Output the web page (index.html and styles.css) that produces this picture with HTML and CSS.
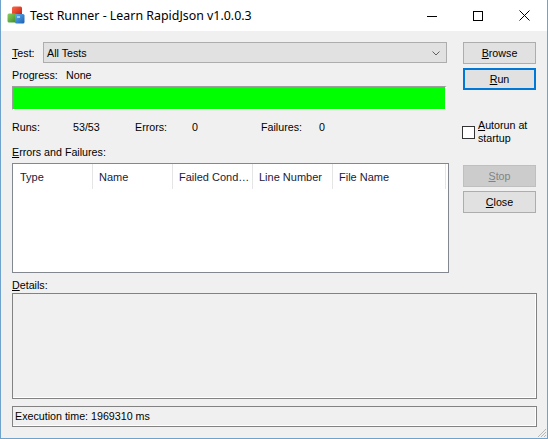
FILE: index.html
```html
<!DOCTYPE html>
<html>
<head>
<meta charset="utf-8">
<link rel="stylesheet" href="styles.css">
</head>
<body>
<div class="window">
  <div class="titlebar">
    <svg class="appicon" width="18" height="18" viewBox="0 0 18 18">
      <defs>
        <linearGradient id="gr" x1="0" y1="0" x2="1" y2="1"><stop offset="0" stop-color="#ff6a4a"/><stop offset="1" stop-color="#c01a10"/></linearGradient>
        <linearGradient id="gg" x1="0" y1="0" x2="1" y2="1"><stop offset="0" stop-color="#8fd060"/><stop offset="1" stop-color="#3a8a2a"/></linearGradient>
        <linearGradient id="gb" x1="0" y1="0" x2="1" y2="1"><stop offset="0" stop-color="#5fb0f0"/><stop offset="1" stop-color="#1a5fb0"/></linearGradient>
      </defs>
      <rect x="5" y="0.5" width="10" height="9" rx="1.5" fill="url(#gr)"/>
      <rect x="0.5" y="7.5" width="9" height="9" rx="1.5" fill="url(#gg)"/>
      <rect x="8" y="8" width="9.5" height="9.5" rx="1.5" fill="url(#gb)"/>
      <rect x="10" y="10" width="3" height="2" fill="#bfe3ff" opacity="0.7"/>
    </svg>
    <span class="title">Test Runner - Learn RapidJson v1.0.0.3</span>
    <div class="caption">
      <div class="cbtn"><svg width="10" height="10" viewBox="0 0 10 10"><line x1="0" y1="5.5" x2="10" y2="5.5" stroke="#000" stroke-width="1"/></svg></div>
      <div class="cbtn"><svg width="10" height="10" viewBox="0 0 10 10"><rect x="0.5" y="0.5" width="9" height="9" fill="none" stroke="#000" stroke-width="1"/></svg></div>
      <div class="cbtn"><svg width="11" height="11" viewBox="0 0 11 11"><path d="M0.5 0.5 L10.5 10.5 M10.5 0.5 L0.5 10.5" stroke="#000" stroke-width="1" fill="none"/></svg></div>
    </div>
  </div>
  <div class="client">
    <div class="top">
      <div class="left">
        <div class="test-row">
          <span class="test-label"><u>T</u>est:</span>
          <div class="combo">
            <span>All Tests</span>
            <svg class="chev" width="8" height="5" viewBox="0 0 8 5"><path d="M0.5 0.5 L4 4 L7.5 0.5" stroke="#606060" stroke-width="1" fill="none"/></svg>
          </div>
        </div>
        <div class="progress-label"><span class="pl">Progress:</span><span>None</span></div>
        <div class="progress"></div>
        <div class="stats">
          <span class="s1">Runs:</span><span class="s2">53/53</span><span class="s3">Errors:</span><span class="s4">0</span><span class="s5">Failures:</span><span>0</span>
        </div>
        <div class="section-label errors-label"><u>E</u>rrors and Failures:</div>
        <div class="list">
          <div class="list-header">
            <div class="col c1">Type</div>
            <div class="col">Name</div>
            <div class="col">Failed Cond…</div>
            <div class="col">Line Number</div>
            <div class="col c5">File Name</div>
          </div>
        </div>
      </div>
      <div class="right">
        <div class="btn browse"><u>B</u>rowse</div>
        <div class="btn run"><u>R</u>un</div>
        <div class="autorun">
          <span class="checkbox"></span>
          <span class="autorun-text"><u>A</u>utorun at<br>startup</span>
        </div>
        <div class="btn stop disabled"><u>S</u>top</div>
        <div class="btn close"><u>C</u>lose</div>
      </div>
    </div>
    <div class="section-label details-label"><u>D</u>etails:</div>
    <div class="details"></div>
    <div class="status">Execution time: 1969310 ms</div>
  </div>
  <svg class="grip" width="10" height="10" viewBox="0 0 10 10">
    <path d="M9 1 L1 9 M9 4 L4 9 M9 7 L7 9" stroke="#b8b8b8" stroke-width="1" fill="none"/>
  </svg>
</div>
</body>
</html>
```

FILE: styles.css
```css
* { box-sizing: border-box; }
html, body { margin: 0; padding: 0; }
body {
  width: 548px;
  height: 439px;
  overflow: hidden;
  background: #ffffff;
  font-family: "Liberation Sans", Arial, sans-serif;
  font-size: 10.7px;
  color: #000;
}
u { text-decoration: underline; text-underline-offset: 1px; }
.window {
  position: relative;
  width: 548px;
  height: 439px;
  border: 1px solid #6fa3cb;
  border-top: none;
  background: #f0f0f0;
  display: flex;
  flex-direction: column;
}
.titlebar {
  height: 31px;
  flex-shrink: 0;
  background: #ffffff;
  display: flex;
  align-items: center;
}
.appicon { margin-left: 6px; margin-top: -2px; }
.title {
  margin-left: 5px;
  font-family: "Noto Sans", "Open Sans", sans-serif;
  font-size: 12.4px;
  color: #000;
  flex: 1;
}
.caption { display: flex; height: 31px; }
.cbtn {
  width: 46px;
  height: 31px;
  display: flex;
  align-items: center;
  justify-content: center;
}
.client {
  flex: 1;
  padding: 0 10px 0 11px;
  display: flex;
  flex-direction: column;
}
.top { display: flex; }
.left { width: 437px; display: flex; flex-direction: column; }
.right { margin-left: 13px; display: flex; flex-direction: column; }

.test-row { display: flex; align-items: center; margin-top: 11px; height: 21px; }
.test-label { width: 31px; }
.combo {
  width: 404px;
  height: 21px;
  background: #e1e1e1;
  border: 1px solid #adadad;
  display: flex;
  align-items: center;
  justify-content: space-between;
  padding: 0 6px 0 3px;
}
.chev { margin-top: 1px; }
.progress-label { margin-top: 6px; height: 13px; line-height: 13px; display: flex; }
.pl { width: 54px; }
.progress {
  margin-top: 4px;
  width: 435px;
  height: 24px;
  background: #00ff00;
  border-top: 1px solid #9d9d9d;
  border-left: 1px solid #9d9d9d;
  border-right: 2px solid #ffffff;
  border-bottom: 1px solid #ffffff;
}
.stats { margin-top: 11px; height: 13px; line-height: 13px; display: flex; }
.s1 { width: 61px; }
.s2 { width: 62px; }
.s3 { width: 57px; }
.s4 { width: 69px; }
.s5 { width: 58px; }
.section-label { height: 13px; line-height: 13px; }
.errors-label { margin-top: 12px; }
.list {
  margin-top: 4px;
  width: 437px;
  height: 110px;
  background: #ffffff;
  border: 1px solid #828790;
}
.list-header { display: flex; height: 25px; }
.col {
  width: 80px;
  height: 25px;
  line-height: 26px;
  padding-left: 6px;
  border-right: 1px solid #e5e5e5;
  color: #1a1a3a;
  font-size: 11px;
  white-space: nowrap;
  overflow: hidden;
}
.col.c1 { padding-left: 7px; }
.col.c5 { width: 113px; }

.btn {
  width: 73px;
  height: 22px;
  background: #e1e1e1;
  border: 1px solid #adadad;
  display: flex;
  align-items: center;
  justify-content: center;
  margin-left: 1px;
}
.browse { margin-top: 11px; }
.run { margin-top: 4px; border: 2px solid #0078d7; }
.autorun { margin-top: 29px; display: flex; height: 26px; }
.checkbox {
  width: 13px;
  height: 13px;
  border: 1px solid #333333;
  background: #ffffff;
  margin-top: 7px;
}
.autorun-text { margin-left: 3px; line-height: 13px; }
.stop { margin-top: 20px; }
.close { margin-top: 4px; }
.btn.disabled { background: #cccccc; border-color: #bfbfbf; color: #838383; }

.details-label { margin-top: 6px; }
.details {
  margin-top: 1px;
  height: 106px;
  border: 1px solid #828282;
  box-shadow: inset -1px -1px 0 #ffffff;
}
.status {
  margin-top: 7px;
  height: 21px;
  border: 1px solid #828282;
  box-shadow: inset -1px -1px 0 #ffffff;
  padding-left: 2px;
  line-height: 19px;
}
.grip { position: absolute; right: 0; bottom: 0; }
```
